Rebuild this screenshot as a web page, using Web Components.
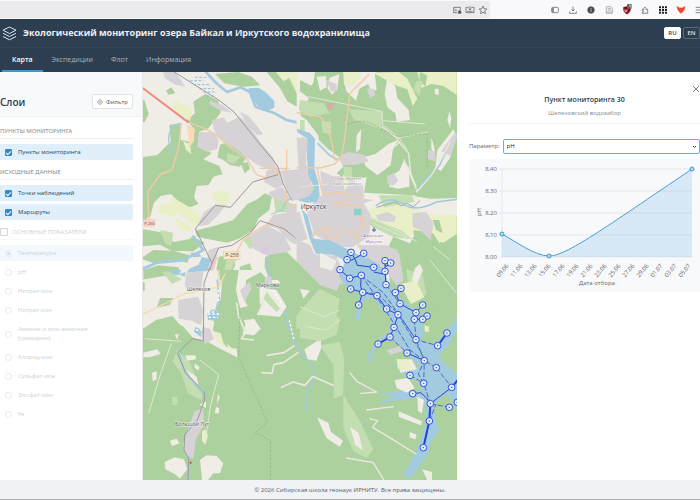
<!DOCTYPE html>
<html lang="ru">
<head>
<meta charset="utf-8">
<meta name="viewport" content="width=device-width, initial-scale=1">
<title>Экологический мониторинг</title>
<style>
    * { box-sizing: border-box; }
    body {
        margin: 0;
        min-height: 100vh;
        display: flex;
        flex-direction: column;
        overflow: hidden;
        background: #fff;
        color: #2c3e50;
        font: 7px/9px "Open Sans", "Noto Sans", sans-serif;
    }
    main {
        flex: 1;
        display: grid;
        grid-template-columns: 143px minmax(0, 1fr) 243px;
    }
</style>
</head>
<body>
<browser-bar></browser-bar>
<app-header>
    Экологический мониторинг озера Байкал и Иркутского водохранилища
</app-header>
<main>
    <layer-panel>
        <layer-group label="Пункты мониторинга">
            <layer-item checked>Пункты мониторинга</layer-item>
        </layer-group>
        <layer-group label="Исходные данные">
            <layer-item checked>Точки наблюдений</layer-item>
            <layer-item checked>Маршруты</layer-item>
        </layer-group>
        <layer-group label="Основные показатели" toggle>
            <layer-item type="radio" checked>Температура</layer-item>
            <layer-item type="radio">pH</layer-item>
            <layer-item type="radio">Нитрит-ион</layer-item>
            <layer-item type="radio">Нитрат-ион</layer-item>
            <layer-item type="radio">Аммиак и ион-аммония (суммарно)</layer-item>
            <layer-item type="radio">Хлорид-ион</layer-item>
            <layer-item type="radio">Сульфат-ион</layer-item>
            <layer-item type="radio">Фосфат-ион</layer-item>
            <layer-item type="radio">Fe</layer-item>
        </layer-group>
    </layer-panel>
    <lake-map></lake-map>
    <point-panel>
        <span slot="name">Пункт мониторинга 30</span>
        <span slot="place">Шелеховский водозабор</span>
        <param-chart></param-chart>
    </point-panel>
</main>
<app-footer>© 2026 Сибирская школа геонаук ИРНИТУ. Все права защищены.</app-footer>

<script>
// small helper, every component gets an open root
class Base extends HTMLElement {
    constructor() {
        super();
        this.attachShadow({mode: "open"});
    }
    connectedCallback() {
        this.shadowRoot.innerHTML = "<style>*{box-sizing:border-box}</style>" + this.render();
    }
}

class BrowserBar extends Base {
    render() {
        const icon = (name, body) => `<button aria-label="${name}"><svg viewBox="0 0 12 12">${body}</svg></button>`;
        return /*html*/`
<style>
    :host { display: flex; height: 19px; padding: 1px 0; background: #f9f9fb; overflow: hidden; color: #5b5b66; }
    .url { flex: 1; display: flex; justify-content: flex-end; align-items: center; gap: 4px; padding-right: 3px; margin-right: 56px; background: #ebebed; border-radius: 0 3px 3px 0; }
    .tools { display: flex; margin-right: -8px; }
    button { border: 0; padding: 0; background: none; color: inherit; display: grid; place-items: center; width: 18px; }
    .url button { width: 9px; }
    svg { width: 8px; height: 8px; fill: none; stroke: currentColor; stroke-width: 1.1; overflow: visible; }
</style>
<div class="url">
    ${icon("Перевод", '<path d="M6 10H1V2h10v4M3 4l3 3M3 7h2"/><path d="M8 8h4v3H8zM9 8V7h2v1" fill="currentColor"/>')}
    ${icon("Установить", '<path d="M4 2H0v8h12V2H8M6 0v6M4 4l2 2 2-2M2 8h8"/>')}
    ${icon("Закладка", '<path d="M6 .2l1.700 3.900 4.100.4-3.100 2.800.9 4.200L6 9.300l-3.600 2.200.9-4.200L.2 4.500l4.100-.4z"/>')}
</div>
<div class="tools">
    ${icon("Боковая панель", '<rect x="1" y="2" width="10" height="8" rx="1.500"/><path d="M3 3v6" stroke-width="2"/>')}
    ${icon("Загрузки", '<path d="M6 1v6M3.500 5L6 7.500 8.500 5M1 8v3h10V8"/>')}
    ${icon("Информация", '<circle cx="6" cy="6" r="5" fill="#45454d"/><path d="M6 3v6" stroke="#ddd"/>')}
    ${icon("Чтение", '<path d="M2 1h7l2 2v8H2zM4 4h5M4 6h5M2 9h9" stroke="#96969c"/>')}
    ${icon("Защита", '<path d="M6 1l5 1v3c0 4-3 6-5 7-2-1-5-3-5-7V2z" fill="#8d0b16" stroke="#6f1018"/><path d="M3 5v3h3V5" stroke="#fff"/><rect x="6" y="-3" width="7" height="7" rx="1" fill="#5d6660" stroke="none"/><path d="M9 -1h2v3" stroke="#eee"/>')}
    ${icon("Расширения", '<path d="M2 5h2.500C3 1 9 1 7.500 5H10v6H2V9c3 0 3-2 0-2z"/>')}
    ${icon("Приложения", '<path d="M0 2h12M0 6h12M0 10h12" stroke="#222" stroke-width="3" stroke-dasharray="3 1.500"/>')}
    ${icon("Кошелёк", '<path d="M0 1l4 2h4l4-2-2 6-4 4-4-4z" fill="#f0452b" stroke="#f0452b"/>')}
    ${icon("Меню", '<path d="M1 2h10M1 6h10M1 10h10"/>')}
</div>`;
    }
}

class AppHeader extends Base {
    render() {
        return /*html*/`
<style>
    :host { display: block; background: #2c3e50; color: #fff; }
    .top { height: 29px; display: flex; align-items: center; gap: 6px; padding: 0 0 0 2px; border-bottom: 1px solid #34465a; }
    h1 { flex: 1; margin: 0; font-size: 9px; line-height: 14px; font-weight: 700; color: #ecf0f4; }
    .logo { width: 15px; height: 15px; fill: none; stroke: #d9e2e9; stroke-width: 1; stroke-linejoin: round; }
    .lang { display: flex; gap: 2px; }
    .lang button { width: 17px; height: 12px; padding: 0; border: 1px solid #5a6978; border-radius: 2px; background: none; color: #dfe5ea; font: 600 6px/8px "Open Sans", sans-serif; }
    .lang .on { background: #fff; border-color: #fff; color: #2c3e50; }
    nav { display: flex; padding-left: 2px; height: 24px; }
    a { display: flex; align-items: center; padding: 0 9px; border-bottom: 2px solid transparent; color: #a9b4be; text-decoration: none; }
    a.on { padding: 0 10px; color: #fff; font-weight: 600; border-color: #3498db; }
</style>
<div class="top">
    <svg class="logo" viewBox="0 0 15 15"><path d="M7.500 1L14 4.200 7.500 7.500 1 4.200z"/><path d="M1 7.200l6.500 3.300L14 7.200M1 10.500l6.500 3.300 6.500-3.300"/></svg>
    <h1><slot></slot></h1>
    <div class="lang"><button class="on">RU</button><button>EN</button></div>
</div>
<nav><a class="on" href="#map">Карта</a><a href="#exp">Экспедиции</a><a href="#fleet">Флот</a><a href="#info">Информация</a></nav>`;
    }
}

class LayerPanel extends Base {
    render() {
        return /*html*/`
<style>
    :host { display: block; background: #fff; border-right: 1px solid #e8e8e8; }
    header { height: 45px; display: flex; align-items: flex-end; justify-content: space-between; padding: 0 9px 7px 0; background: #f8f9fb; border-bottom: 1px solid #eceff1; }
    h2 { margin: 0; font-size: 10px; line-height: 14px; font-weight: 600; }
    button { display: flex; align-items: center; gap: 3px; height: 15px; padding: 0 4px; border: 1px solid #e0e2e4; border-radius: 2px; background: #fff; color: #555; font: 6px/8px "Open Sans", sans-serif; }
    svg { width: 6px; height: 6px; fill: none; stroke: #777; }
    .list { padding: 9px 9px 0 0; }
</style>
<header>
    <h2>Слои</h2>
    <button><svg viewBox="0 0 12 12"><circle cx="6" cy="6" r="4"/><circle cx="6" cy="6" r="1"/><path d="M6 0v2M6 10v2M0 6h2M10 6h2"/></svg>Фильтр</button>
</header>
<div class="list"><slot></slot></div>`;
    }
}

class LayerGroup extends Base {
    render() {
        const label = this.getAttribute("label");
        const toggle = this.hasAttribute("toggle");
        return /*html*/`
<style>
    :host { display: block; margin-bottom: 7px; }
    :host([toggle]) { opacity: .4; }
    h3 { margin: 0 0 5px; height: 13px; display: flex; align-items: flex-start; font: 400 6px/10px "Noto Sans", sans-serif; text-transform: uppercase; color: #7f8c8d; border-bottom: 1px solid #eceff1; }
    label { display: flex; align-items: center; gap: 4px; }
    input { appearance: none; width: 8px; height: 8px; margin: 0; border: 1px solid #999; border-radius: 1px; }
    .items { display: grid; gap: 3px; }
</style>
<h3>${toggle ? `<label><input type="checkbox">${label}</label>` : label}</h3>
<div class="items"><slot></slot></div>`;
    }
}

class LayerItem extends Base {
    render() {
        const type = this.getAttribute("type") || "checkbox";
        return /*html*/`
<style>
    :host { display: block; font-size: 6px; }
    label { display: flex; align-items: center; gap: 6px; padding: 4px 30px 3px 5px; border-radius: 0 2px 2px 0; color: #2c3e50; }
    :host([checked]) label { background: #e1effb; }
    :host([type=radio]) label { color: #7d8791; }
    input { flex: none; appearance: none; display: grid; place-items: center; width: 7px; height: 7px; margin: 0; border: 1px solid #c4cacf; border-radius: 1px; }
    input[type=checkbox]:checked { background: #2a8ad4; border-color: #2a8ad4; }
    input[type=checkbox]:checked::after { content: ""; width: 4px; height: 2px; border: solid #fff; border-width: 0 0 1px 1px; transform: rotate(-45deg); }
    input[type=radio] { border-radius: 50%; }
    input[type=radio]:checked::after { content: ""; width: 3px; height: 3px; border-radius: 50%; background: #9aa5af; }
</style>
<label><input type="${type}" ${this.hasAttribute("checked") ? "checked" : ""}><span><slot></slot></span></label>`;
    }
}

// stations on the reservoir, offsets are from the south-east sheet origin
const stations = [
    [153,37],[191,40],[141,59],[120,89],[221,82],[255,62],[272,69],[255,94],[149,115],[184,106],[258,134],
    [152,147],[188,157],[176,195],[231,167],[303,145],[286,158],[300,191],[368,195],[260,207],[294,224],
    [348,218],[381,228],[343,238],[368,238],[282,262],[441,279],[270,291],[234,312],[348,299],[413,317],
    [321,339],[373,362],[409,383],[330,406],[371,430],[455,442],[338,461],[391,491],[448,502],[388,543],
    [370,623],[472,487]
];

class LakeMap extends Base {
    render() {
        const pins = stations.map(([x, y]) => `<circle cx="${x}" cy="${y}" r="10"/><path d="M${x - 2} ${y}h4"/>`).join("");
        return /*html*/`
<style>
    :host { display: block; position: relative; overflow: hidden; background: #add19e; min-height: 408px; }
    svg { position: absolute; inset: 0; width: 100%; height: 100%; }
    .land { fill: #f0ece6; }
    .wood { fill: #add19e; }
    .field { fill: #e9efc6; }
    .grass { fill: #c3deb0; }
    .town { fill: #d6d2d5; }
    .water { fill: #a3cbe0; }
    .river { fill: none; stroke: #a3cbe0; stroke-width: 8; stroke-linejoin: round; stroke-linecap: round; }
    .rail { fill: none; stroke: #9b999e; stroke-width: 3; stroke-linejoin: round; }
    .road { fill: none; stroke: #f0cba8; stroke-width: 4; stroke-linejoin: round; }
    .path { fill: none; stroke: #dfe8d2; stroke-width: 3; stroke-linejoin: round; }
    .valley { fill: none; stroke: #ece9de; stroke-width: 5; stroke-linejoin: round; stroke-linecap: round; }
    .edge { fill: none; stroke: #93ac8e; stroke-width: 2; stroke-dasharray: 8 4; }
    .route { fill: none; stroke: #2844d2; stroke-width: 3; stroke-linejoin: round; }
    .dash { stroke-dasharray: 16 6; stroke: #4a68cf; }
    .pins { fill: #dcebf8; stroke: #3450d8; stroke-width: 3; }
    text { font-family: "Open Sans", sans-serif; font-size: 18px; fill: #555; paint-order: stroke; stroke: #ffffffb0; stroke-width: 3px; }
</style>
<svg viewBox="429 216 942 1224" preserveAspectRatio="xMidYMid slice" role="img" aria-label="Карта">
    <rect class="wood" x="0" y="0" width="1900" height="1700"/>

    <!-- north-west -->
    <g transform="translate(420 210)">
        <path class="land" d="M0 0H482V640H300L230 700 215 800 60 740 0 760Z"/>
        <path class="wood" d="M0 262L52 255 92 215 88 165 120 160 122 210 150 215 165 180 140 150 165 130 160 95 196 72 235 92 242 128 225 150 205 175 178 185 176 225 215 250 190 268 238 288 248 312 220 320 206 345 170 348 162 382 175 402 150 412 120 398 92 372 62 378 42 398 30 442 0 460Z"/>
        <path class="wood" d="M240 225L262 215 300 245 320 262 300 290 270 285 250 270 232 262ZM302 280l22-4 6 20-16 14zM0 82l14 10 12 40-12 24-14 0zM78 62l16-10 12 18-20 4zM225 12l70-6 40 14 26 26-50 4-58-10zM380 6h100v110l-38-22-22-40z"/>
        <path class="wood" d="M165 482L222 468 280 450 322 402 352 388 374 370 396 378 388 420 356 445 340 480 300 505 262 518 206 508 172 500ZM10 478l60 10 32 28 62-12 30 14-34 26-66-2-34-18-60 6zM40 540l60 2 50 14-8 22-40-8-60 10-40-14zM10 600l46-14 60 6 12 38H10zM236 560l44-8 6 34-22 44h-40zM375 560l46-8 24 30 35 16v32h-92l-14-40zM300 590l30-10 14 50h-50zM150 500l30 10-20 14z"/>
        <path class="field" d="M104 90l54 28-8 34-54-38zM55 408l34-8 24 30-18 12-40-14zM92 382l30 14 40 24 24 28-20 22-30-26-44-34zM218 370l22-10 30 10-6 34-34 6zM105 448l40 12 10 24-34-6zM22 442l22 6 0 26-28-10zM408 6l22 28 18-10 22 46 10-10V6zM130 214l20 8 4 30-16-12z"/>
        <path class="grass" d="M262 250l40 10-20 22-22-8zM338 70l30 10-6 34-22-20zM60 480l40 8-6 40-18-6zM310 510l34-20 20 24-34 24zM262 560l30 4-26 50-16-2zM400 372l30 10 24 20-12 24-36 0z"/>
        <path class="town" d="M216 150L252 142 262 158 300 140 330 170 362 218 400 262 412 292 382 296 352 284 320 262 290 238 262 222 232 200 222 178ZM182 186l42 2 12 24-4 24-30 10-30-16 2-30zM70 6h36l30 44-30-6-32-20zM172 468l20-42 34-22 32 0-24 32-30 28zM210 92l38 14 28 22-34-6-34-20zM300 126l26 12 44 54-18 4-40-46zM380 300l36-6 14 50-20 12-38-20zM446 406l34-8v130l-30-12-36-40-36-10 22-32 38-6zM330 496l50-30 50 26 24 48-40 14-40 0-34-18zM206 540l30-10-12 60-16 40h-14zM388 366l40-16 22 36-20 12-42-20z"/>
        <path fill="#d9c7e2" d="M368 530l20 2-4 20-20-4z"/>
        <path fill="#fad9b4" d="M140 162l24 14-2 36-14 22-4-40z"/>
        <path class="water" d="M325 55l30-2 22 14 26 26 0 20-22 10-28-16-22-24zM148 596l28-12 10-24 24 8-8 40-22 22-24-8-20-8zM150 548l26 0 8 12-26 2z"/>
        <path class="river" d="M196 4Q230 44 262 66L302 52 330 66 346 110 400 128 440 150 482 160M0 600L50 578 120 572 150 560 190 540 160 500"/>
        <path class="river" style="stroke-width:4" d="M120 160Q84 170 86 214L100 250M480 375L440 392 426 420 395 432"/>
        <path fill="none" stroke="#8cbdde" stroke-width="3" stroke-dasharray="8 5" d="M150 32h40M165 22h40M160 44h50M178 56h44M190 66h38M200 78h26"/>
        <path class="road" d="M124 160L116 232 96 300 62 312 24 364 26 450M148 158L200 178 236 200 262 226 320 266 350 314 378 324 412 312 440 298M440 240V400L480 410M358 295h90M210 612l22-50M252 620l28-56 30-54 40-30 42-22 50 26"/>
        <path class="road" style="stroke:#ee8f7e;stroke-width:6" d="M8 54L146 158"/>
        <path class="rail" d="M100 4L182 56 236 90 282 126 348 208 412 286 430 342 456 392M414 314L338 336 272 412 226 406 166 476 216 580 196 640M216 580L236 534 276 526 330 490 360 452 432 476 482 516"/>
        <rect x="10" y="448" width="36" height="22" rx="3" fill="#f7cfc9"/><text x="13" y="464" style="stroke:none;font-size:12px">Р-255</text>
        <rect x="250" y="544" width="50" height="24" fill="#fbe6c4" stroke="#dfb98a"/><text x="256" y="561" style="stroke:none;font-size:15px">Р-258</text>
    </g>

    <!-- north-east -->
    <g transform="translate(900 210)">
        <path class="land" d="M-10 6H45L40 40 20 60 26 88-10 130ZM50 20l28-2 2 34-20 10zM88 24l30-12-6 46-16 16-14-20zM130 6h100l-22 34-30 16-10 36-30-30zM196 16l28-8 6 50-16 10zM262 20l24 28 6 36 34 36 4 30-40 6-4-26-24-18-8-40zM170 196l14-20-4 60-12 12zM190 262l36-10 40-30 28-12-16 32-6 44-40 30-36-28zM268 320l30-18 12-28 18 20 0 56-32 6-28-6zM-10 130L20 150 50 190 84 236 118 262 130 290 110 310 140 330 200 322 192 368 270 372 340 376 380 385 472 380V440L400 450 390 500 352 480 330 520 280 500 260 540 270 640H-10ZM394 202l8 26 4 30-12-20zM406 290l6-50 28-36 20-26 10 20-20 66-28 40zM448 124l6 20-4 30-8-24zM404 56l12 0 0 20-12-4z"/>
        <path class="field" d="M130 6h56l-20 36-34 4zM220 8l76-2 26 20 30 60-14 22-16-50-30-10-34-18zM352 6h118v68l-40-26-36-6-30 12zM200 422l54-22 70 8 58 24 88 4v56l-40 26-54-26-80 6-92-46zM392 440l46 2-4 68-18 10z"/>
        <path class="wood" d="M360 6l22 10-6 34-18-20zM0 30l40 20-14 34-26-20zM56 192l34-10 20 44-22 14-32-30zM0 92l50 14 40 30-40 6-50-20zM340 480l60 10 20 34 52 0v120H320l-40-40 30-40 40 0zM196 540l60 10 30 40-30 30-50-26zM142 370l52 6-12 18-34 2zM340 378l60-6 72-18v30l-76 2zM398 450l20 0 10 40-20-10z"/>
        <path class="grass" d="M148 118l100 6-4 54-84-30zM0 90l70 10 20 30-60 10-34-20zM64 154l30 0 0 40-26-6zM130 290l24 0 6 50-28-14zM236 376l100 0 8 20-92 16zM340 60l10-26 18 0-10 44zM0 150l14 0 0 40-14-10zM200 440l100 40 40 28-58-6-82-40zM266 530l30 10-14 50-30-20zM340 580l40-10 10 50-42 12zM0 345l40 2 8 24-30 8-18-10z"/>
        <path class="town" d="M116 262l26-16 50 8 14 20-34 10-44 2zM200 56l22 0 4 20-16 8zM262 318l22-10 10 26-18 14-14-10zM228 436l36-10 24 14-6 16-48-4zM338 430l40-4 22 34-8 50-28-26-26-14zM82 318l46 0 62 30 0 50 24 40-8 64-50 30-60-4-22-40 20-60-24-60zM-10 200L22 214 18 280 36 350 0 360zM-10 296h30l20 80-50 14zM78 30l32 12 0 20-16 4zM40 380l62-4 60 40-8 60-66 40-50-24zM-10 510l40 14 20 44 66 6 20 66H-10zM384 240l22 4 0 30-24-8zM424 244l40-56 8 10-20 60zM4 200l22 8 0 40-20 0z"/>
        <path fill="#cdb3a4" d="M80 98l22 0-4 22-16 0z"/>
    </g>

    <!-- city centre and the upper river -->
    <g transform="translate(429 216)">
        <path class="town" d="M412 296L484 292 492 345 470 382 448 386 430 350ZM398 436L470 420 484 470 494 500 470 510 430 470 390 458ZM532 296L600 326 600 372 690 384 640 402 662 450 646 512 600 520 548 494 514 484 492 420 540 394ZM480 545l100 6 20 60-20 50-50-10-20-40-34-20zM640 520l90 0 60 40 0 60-30 20-30-40-50-40z"/>
        <path class="wood" d="M372 550l60-10 60 60 40 40 60 20 0 40-140-20-50-60zM770 550l80 10 92 20v150l-60-20-50-60-50-20z"/>
        <path class="grass" d="M530 650l60 30-10 60-60 40-60-10 0-40zM790 590l50 20 10 60-50 0zM530 820l60-10 14 50-4 110-28 10 0-100z"/>
        <path class="field" d="M770 636l50-10 24 50-40 20zM600 306l20 30-16 20z"/>
        <path class="water" d="M462 170L500 182 516 200 514 290 526 330 530 370 520 390 490 392 462 384 500 372 514 350 496 310 492 260 494 200 462 180ZM476 412L494 430 512 500 560 505 640 545 700 572 722 592 738 640 772 680 806 706 832 732 842 780 836 806 870 818 900 790 942 738V772L915 822 886 850 900 872 942 905V995L905 965 874 1000 876 1040 888 1075 862 1112 854 1148 804 1218 780 1212 808 1160 832 1108 846 1060 850 1010 836 976 760 985 700 996 752 972 700 966 800 955 836 960 832 928 790 915 750 876 810 892 830 882 800 856 770 820 746 802 700 815 682 870 672 856 696 812 738 782 744 740 715 712 690 674 656 690 650 745 638 745 644 690 652 664 615 655 588 612 608 566 570 548 518 545 500 500Z"/>
        <path class="river" style="stroke-width:5" d="M525 215L560 250 582 262M908 240L890 280 860 310 822 350M700 400Q740 370 780 396T880 390L942 382"/>
        <path class="river" style="stroke-width:6;stroke-dasharray:12 10" d="M372 560L386 650 430 716 434 760 464 830 512 880 512 920 492 960 490 1020"/>
        <path class="land" d="M484 832l30-20 20-12 0 30-14 36-26-4zM522 1036l34 16 8 28 36 26-10 18-40-26zM760 862l46 0 16 30-50 10z"/>
        <path class="valley" d="M508 914L486 940 450 930 416 946M512 914L570 940"/>
    </g>
    <g transform="translate(900 210)">
        <path class="valley" style="stroke-width:4" d="M350 366l44-50 36-60 20-40M348 350l-16-40-6-60-34-40M350 360l-38-90M256 252l44-36M294 206l-48-36"/>
        <path class="path" d="M24 80L246 124 248 164 296 202 322 240M250 152L374 162M296 204L384 186M-4 352l90-10M210 438l140 76M220 460l100 44"/>
        <path class="edge" d="M140 164Q200 140 240 176L296 200 382 190 382 290"/>
        <path fill="none" stroke="#9caabd" stroke-width="3" d="M230 412Q270 400 286 396L304 408 320 400 340 410 360 392"/>
        <path class="road" d="M208 12L150 70 140 150 132 220 124 260 104 270 96 220 84 170 60 140-10 128M-10 292L60 294 104 282 124 262M52 298l16 76 44-6 80 10M100 404l80 2 6 34-10 70M36 500l30-26 60 8 40 8 10 36M104 400l50-12M64 480l20 24 40-6M180 440l20 30"/>
        <path fill="none" stroke="#6f7fc0" stroke-width="4" d="M222 472v14M216 480h12"/>
        <rect x="162" y="416" width="22" height="20" rx="2" fill="#8bd1c5"/>
        <text x="2" y="416" style="font-size:20px;fill:#333">Иркутск</text>
        <text x="104" y="331" style="font-size:12px;fill:#888">Ново-Иркутск</text>
        <text x="98" y="346" style="font-size:12px;fill:#888">парк-комплекс</text>
        <text x="190" y="502" style="font-size:13px;fill:#8a66bd">Аэропорт</text>
        <text x="197" y="518" style="font-size:13px;fill:#8a66bd">Иркутск</text>
    </g>

    <!-- south-west -->
    <g transform="translate(420 810)">
        <path class="land" d="M0 30L120 10 232 0 240 40 226 66 230 120 218 180 260 232 290 236 292 262 240 236 200 214 160 204 130 170 96 150 60 152 0 180ZM262 0h110v90l-20 30-20-14-40 10-20 40 70-10 20 30-20 20-50-6-30-20-24-40 20-50-20-30zM350 50l60 10 30 50-20 30-70-6 20-40z"/>
        <path class="wood" d="M250 0l46 0-8 60 10 44 18 60-10 34-30 10-60-60 24-40zM318 30l44-24 26 30-30 20 2 60-20 20-24-40zM10 176l38-26 50-12 40 50-60 40-68-8zM60 84l40 0-10 20-40 10zM0 30l14 8 0 24-14 4z"/>
        <path class="town" d="M140 10l50-8-6 60-30 0-20-14zM114 90l60-10 16 40-6 46-30-14-38-6zM186 170l24 6 12 30-26 16-12-20zM374 20l20 0 0 18-20 0zM300 60l30-24 4 20-20 40zM164 424l26-10 2 50-24 42-8 60-22-6-10-36 18-54z"/>
        <path class="field" d="M222 184l20 6 10 36-20-8zM186 484l10-6 8 20-8 26-10-12zM260 220l22 20-14 4z"/>
        <path class="grass" d="M112 240l40 40 20 60 20 20-8 30-40-20-20-60-26-36zM96 380l16 0 0 24-14 2zM66 6l20-2 40 24-30 14zM380 66l40 50-10 10-40-40z"/>
        <path class="land" d="M136 256l30 0 2 12-26 4zM164 280l14 10-2 12-12-8zM36 308l14-4 0 24-12 6zM10 248l42-10 10 14-32 10-20 0zM104 194l12-2-4 18zM140 300l30 20 6 24-20-10zM178 404l20-10 0 20zM228 412l10 2-2 16-12 0zM74 576l30-14 28 6 10 30-22 28-16-14-28-14zM180 570l20-14 30 2 20 22-10 30-20 0-16 20h-18zM90 512l20-6 8 14-22 8zM234 372l6 10-10 20z"/>
        <path class="valley" d="M290 100l6 40 20 46M340 210l-36-4 20-30M382 256l50-8 30-20M366 308l30 2 6-26 28-6 44-30"/>
        <path class="path" d="M14 206l110 8M94 220L62 310 26 430M180 270l56 44-24 90-16 110"/>
        <path class="water" d="M90 0h34l-8 16-20-4zM116 14l20-8 0 14zM202 128l16-10 20 12-8 20-26 0zM166 170l20 10-4 20-20-14z"/>
        <path class="river" style="stroke-width:5" d="M232 30l6 60-20 60M116 242l18 64 50 60 14 10M146 560l0 70"/>
        <path fill="none" stroke="#fff" stroke-width="4" stroke-dasharray="7 6" d="M204 132h34M206 142h28M168 180h18M202 126h20M236 60v40M400 60l30 50M448 150l14 60"/>
        <path class="road" style="stroke:#f2dcae" d="M6 134L60 108 132 72 240 50 236 0M236 50l20-40"/>
        <path class="rail" d="M208-4L192 40 190 212 156 206 112 250 136 306 192 366 194 390 172 450 134 494 132 540 146 566 144 630"/>
        <path class="edge" d="M300 120L296 260 382 456 346 488 392 512V630"/>
        <circle cx="152" cy="578" r="3" fill="#d33"/>
        <text x="140" y="62" style="font-size:16px">Шелехов</text>
        <text x="348" y="52" style="font-size:16px">Маркова</text>
        <text x="105" y="468" style="font-size:16px">Большой Луг</text>
    </g>

    <!-- south-east with the reservoir -->
    <g transform="translate(900 720)">
        <path class="land" d="M60 38l50 24-14 30-36-10zM345 85l14-14 10 20-18 40-16-10zM0 146l30 6-20 24zM284 420l40-6 20 30-24 14-30-14zM296 514l70 30-4 12-66-26zM352 470l20 10-6 40-12-6zM330 576l20 8-4 14-18-6zM366 688l30 8 0 24-14 0z"/>
        <path class="field" d="M290 360l34 2 10 30-40-6zM374 256l14 4-2 16-12-2z"/>
        <path class="grass" d="M0 230l60-26 60 30-10 50-50 20-60-10zM130 464l50 80 40 84-20 26-40-20-30-70z"/>
        <path class="land" d="M150 560l26 20 12 50-22-14z"/>
        <path class="town" d="M260 330l40-12 10 14-40 14z"/>
        <path class="valley" style="stroke-width:4" d="M150 398l20 26 60 32-48 4M200 510l80-10M210 536l22 6-14 20 50 30 80 50M140 654l80 14 30 50"/>
        <path class="path" d="M0 200l70 30 50-20M20 260l60 10 40-30M390 60l80 100M400 20l50 40"/>
        <path class="route" d="M153 37L166 60 172 76 221 82M191 40L156 60 141 59M120 89L149 115 184 106 182 138 188 157 176 195M152 147L188 157M255 62L258 80 272 69M221 96L250 102 255 94 258 134M255 62L255 94M286 158L303 145M188 157L231 167 260 207 294 224 282 262 270 291 234 312M286 158L300 191 348 218 368 195M343 238L368 238 381 228M348 218L343 238M441 279L413 317M321 339L373 362M338 461L362 458 380 474 391 491 388 543 370 623M455 442L391 491"/>
        <path class="route" style="stroke-width:6" d="M391 491L388 543 370 623M441 279L413 317M286 158L303 145M234 312l36-21M455 442l20-24"/>
        <path class="route dash" d="M184 106L252 160 348 299M184 106L254 206 330 330 373 362M188 157l44 4 66 64 50 74 65 18M343 238l5 61 25 63 36 21M294 224l68 110 11 28-18 40 16 28 20 61M258 134l42 57M330 406L371 430 373 362M270 291l51 48M409 383l46 59M391 491l57 11M388 543l20-50"/>
        <g class="pins">${pins}</g>
    </g>
</svg>`;
    }
}

class PointPanel extends Base {
    render() {
        return /*html*/`
<style>
    :host { display: block; padding: 11px 0 0 12px; background: #fff; }
    .close { display: block; width: 8px; height: 12px; margin: 0 0 0 auto; padding: 0; border: 0; background: none; }
    .close svg { display: block; width: 8px; height: 8px; stroke: #7a7f84; stroke-width: 1; }
    header { padding-bottom: 5px; text-align: center; border-bottom: 1px solid #eef0f2; }
    h2 { margin: 0 0 4px; font-size: 7px; line-height: 10px; font-weight: 600; }
    p { margin: 0; font-size: 6px; color: #7f8c8d; }
    .row { display: flex; align-items: center; gap: 3px; margin: 15px 0 5px; }
    label { font-size: 6px; color: #566573; }
    select { flex: 1; appearance: none; height: 15px; margin: 0; padding: 0 3px; border: 1px solid #6aafdb; border-radius: 2px; color: #222; font: 6px/9px "Open Sans", sans-serif; background: #fff; }
    .pick { flex: 1; display: grid; align-items: center; }
    .pick > * { grid-area: 1 / 1; }
    .pick svg { justify-self: end; width: 5px; height: 5px; margin-right: 3px; fill: none; stroke: #333; pointer-events: none; z-index: 1; }
</style>
<button class="close" aria-label="Закрыть"><svg viewBox="0 0 8 8"><path d="M1 1l6 6M7 1L1 7"/></svg></button>
<header>
    <h2><slot name="name"></slot></h2>
    <p><slot name="place"></slot></p>
</header>
<div class="row">
    <label for="param">Параметр:</label>
    <div class="pick">
        <select id="param"><option>pH</option></select>
        <svg viewBox="0 0 5 5"><path d="M1 2l1.500 1.500L4 2"/></svg>
    </div>
</div>
<slot></slot>`;
    }
}

class ParamChart extends Base {
    render() {
        const days = ["09.06", "11.06", "13.06", "15.06", "17.06", "19.06", "21.06", "23.06", "25.06", "27.06", "29.06", "01.07", "03.07", "05.07"];
        const levels = ["8,40", "8,30", "8,20", "8,10", "8,00"];
        const line = "M33 75C46 82 66 97 80 97C97 97 134 70 223 10";
        return /*html*/`
<style>
    :host { display: block; background: #f8f9fb; border-radius: 2px; }
    svg { display: block; width: 100%; }
    text { font: 6px "Open Sans", sans-serif; fill: #666; }
    .grid { stroke: #e6e8eb; fill: none; }
    .line { stroke: #4a9fd6; fill: none; }
    .dot { stroke: #3a96d2; fill: #b9dcf2; }
</style>
<svg viewBox="0 0 231 133">
    ${levels.map((l, i) => `<path class="grid" d="M30 ${10 + i * 22}H223"/><text x="28" y="${12 + i * 22}" text-anchor="end">${l}</text>`).join("")}
    <path class="grid" d="M33 10V98"/>
    <path d="${line}V98H33Z" fill="#3498db" fill-opacity=".16"/>
    <path class="line" d="${line}"/>
    <circle class="dot" cx="33" cy="75" r="2"/><circle class="dot" cx="80" cy="97" r="2"/><circle class="dot" cx="223" cy="10" r="2"/>
    ${days.map((d, i) => `<text transform="translate(${40 + i * 14} 107) rotate(-50)" text-anchor="end">${d}</text>`).join("")}
    <text transform="translate(12 53) rotate(-90)" text-anchor="middle">pH</text>
    <text x="128" y="126" text-anchor="middle">Дата отбора</text>
</svg>`;
    }
}

class AppFooter extends Base {
    render() {
        return /*html*/`
<style>
    :host { display: block; padding: 6px 0 4px; text-align: center; font-size: 6px; color: #566068; background: #f0f2f5; border-bottom: 1px solid #a9abae; }
</style>
<slot></slot>`;
    }
}

customElements.define("browser-bar", BrowserBar);
customElements.define("app-header", AppHeader);
customElements.define("layer-panel", LayerPanel);
customElements.define("layer-group", LayerGroup);
customElements.define("layer-item", LayerItem);
customElements.define("lake-map", LakeMap);
customElements.define("point-panel", PointPanel);
customElements.define("param-chart", ParamChart);
customElements.define("app-footer", AppFooter);
</script>
</body>
</html>
